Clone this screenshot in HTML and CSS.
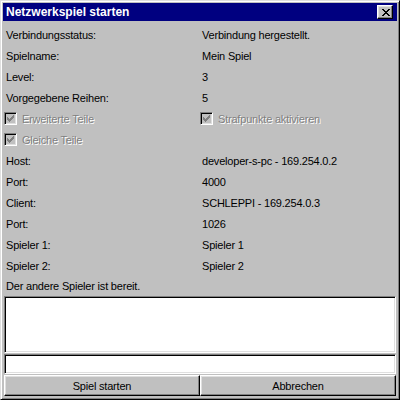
FILE: index.html
```html
<!DOCTYPE html>
<html>
<head>
<meta charset="utf-8">
<link rel="stylesheet" href="styles.css">
</head>
<body>
<div class="window">
  <div class="titlebar">
    <span class="title">Netzwerkspiel starten</span>
    <span class="close">
      <svg width="8" height="7" viewBox="0 0 8 7" shape-rendering="crispEdges" fill="#000">
        <rect x="0" y="0" width="2" height="1"/><rect x="6" y="0" width="2" height="1"/>
        <rect x="1" y="1" width="2" height="1"/><rect x="5" y="1" width="2" height="1"/>
        <rect x="2" y="2" width="4" height="1"/>
        <rect x="3" y="3" width="2" height="1"/>
        <rect x="2" y="4" width="4" height="1"/>
        <rect x="1" y="5" width="2" height="1"/><rect x="5" y="5" width="2" height="1"/>
        <rect x="0" y="6" width="2" height="1"/><rect x="6" y="6" width="2" height="1"/>
      </svg>
    </span>
  </div>
  <div class="content">
    <div class="form">
      <span class="cell">Verbindungsstatus:</span><span class="cell">Verbindung hergestellt.</span>
      <span class="cell">Spielname:</span><span class="cell">Mein Spiel</span>
      <span class="cell">Level:</span><span class="cell">3</span>
      <span class="cell">Vorgegebene Reihen:</span><span class="cell">5</span>
      <span class="check"><span class="box"><svg width="7" height="7" viewBox="0 0 7 7" shape-rendering="crispEdges" fill="#808080"><rect x="6" y="0" width="1" height="1"/><rect x="5" y="1" width="2" height="1"/><rect x="0" y="2" width="1" height="1"/><rect x="4" y="2" width="3" height="1"/><rect x="0" y="3" width="2" height="1"/><rect x="3" y="3" width="3" height="1"/><rect x="0" y="4" width="5" height="1"/><rect x="1" y="5" width="3" height="1"/><rect x="2" y="6" width="1" height="1"/></svg></span><span class="dis">Erweiterte Teile</span></span>
      <span class="check"><span class="box"><svg width="7" height="7" viewBox="0 0 7 7" shape-rendering="crispEdges" fill="#808080"><rect x="6" y="0" width="1" height="1"/><rect x="5" y="1" width="2" height="1"/><rect x="0" y="2" width="1" height="1"/><rect x="4" y="2" width="3" height="1"/><rect x="0" y="3" width="2" height="1"/><rect x="3" y="3" width="3" height="1"/><rect x="0" y="4" width="5" height="1"/><rect x="1" y="5" width="3" height="1"/><rect x="2" y="6" width="1" height="1"/></svg></span><span class="dis">Strafpunkte aktivieren</span></span>
      <span class="check"><span class="box"><svg width="7" height="7" viewBox="0 0 7 7" shape-rendering="crispEdges" fill="#808080"><rect x="6" y="0" width="1" height="1"/><rect x="5" y="1" width="2" height="1"/><rect x="0" y="2" width="1" height="1"/><rect x="4" y="2" width="3" height="1"/><rect x="0" y="3" width="2" height="1"/><rect x="3" y="3" width="3" height="1"/><rect x="0" y="4" width="5" height="1"/><rect x="1" y="5" width="3" height="1"/><rect x="2" y="6" width="1" height="1"/></svg></span><span class="dis">Gleiche Teile</span></span>
      <span class="cell"></span>
      <span class="cell">Host:</span><span class="cell">developer-s-pc - 169.254.0.2</span>
      <span class="cell">Port:</span><span class="cell">4000</span>
      <span class="cell">Client:</span><span class="cell">SCHLEPPI - 169.254.0.3</span>
      <span class="cell">Port:</span><span class="cell">1026</span>
      <span class="cell">Spieler 1:</span><span class="cell">Spieler 1</span>
      <span class="cell">Spieler 2:</span><span class="cell">Spieler 2</span>
    </div>
    <div class="status">Der andere Spieler ist bereit.</div>
    <div class="log"></div>
    <div class="input"></div>
    <div class="buttons">
      <button class="btn">Spiel starten</button>
      <button class="btn">Abbrechen</button>
    </div>
  </div>
</div>
</body>
</html>
```
FILE: styles.css
```css
html, body {
  margin: 0;
  padding: 0;
  background: #c0c0c0;
}
.window {
  box-sizing: border-box;
  width: 400px;
  height: 400px;
  background: #c0c0c0;
  border-style: solid;
  border-width: 1px;
  border-color: #dfdfdf #000 #000 #dfdfdf;
  box-shadow: inset 1px 1px 0 #fff, inset -1px -1px 0 #808080;
  padding: 2px;
  display: flex;
  flex-direction: column;
  font-family: "Liberation Sans", Arial, sans-serif;
  font-size: 11px;
  letter-spacing: -0.2px;
  color: #000;
}
.titlebar {
  height: 18px;
  background: #000080;
  display: flex;
  align-items: center;
  justify-content: space-between;
  padding: 0 4px 0 3px;
  flex: none;
}
.title {
  color: #fff;
  font-weight: bold;
  font-size: 12px;
  letter-spacing: 0;
}
.close {
  box-sizing: border-box;
  width: 16px;
  height: 14px;
  background: #c0c0c0;
  border-style: solid;
  border-width: 1px;
  border-color: #fff #000 #000 #fff;
  box-shadow: inset -1px -1px 0 #808080, inset 1px 1px 0 #dfdfdf;
  display: flex;
  align-items: center;
  justify-content: center;
  padding-left: 1px;
}
.close svg { display: block; }
.content {
  flex: 1;
  display: flex;
  flex-direction: column;
  padding: 3px 1px 0 1px;
}
.form {
  display: grid;
  grid-template-columns: 196px 1fr;
  grid-auto-rows: 21px;
}
.cell {
  padding-left: 2px;
  display: flex;
  align-items: center;
}
.check {
  display: flex;
  align-items: center;
  gap: 5px;
}
.box {
  box-sizing: border-box;
  width: 13px;
  height: 13px;
  background: #c0c0c0;
  border-style: solid;
  border-width: 1px;
  border-color: #808080 #fff #fff #808080;
  box-shadow: inset 1px 1px 0 #000, inset -1px -1px 0 #dfdfdf;
  display: flex;
  align-items: center;
  justify-content: center;
}
.box svg { display: block; }
.dis {
  color: #808080;
  text-shadow: 1px 1px 0 #fff;
}
.status {
  height: 20px;
  padding-left: 2px;
  display: flex;
  align-items: center;
}
.log, .input {
  box-sizing: border-box;
  background: #fff;
  border-style: solid;
  border-width: 1px;
  border-color: #808080 #fff #fff #808080;
  box-shadow: inset 1px 1px 0 #000, inset -1px -1px 0 #dfdfdf;
}
.log {
  height: 57px;
}
.input {
  height: 20px;
  margin-top: 1px;
}
.buttons {
  display: flex;
  margin-top: 1px;
}
.btn {
  flex: 1;
  box-sizing: border-box;
  height: 21px;
  margin: 0;
  background: #c0c0c0;
  border-style: solid;
  border-width: 1px;
  border-color: #fff #000 #000 #fff;
  box-shadow: inset -1px -1px 0 #808080, inset 1px 1px 0 #dfdfdf;
  font-family: "Liberation Sans", Arial, sans-serif;
  font-size: 11px;
  letter-spacing: -0.2px;
  color: #000;
  padding: 0;
}
```
